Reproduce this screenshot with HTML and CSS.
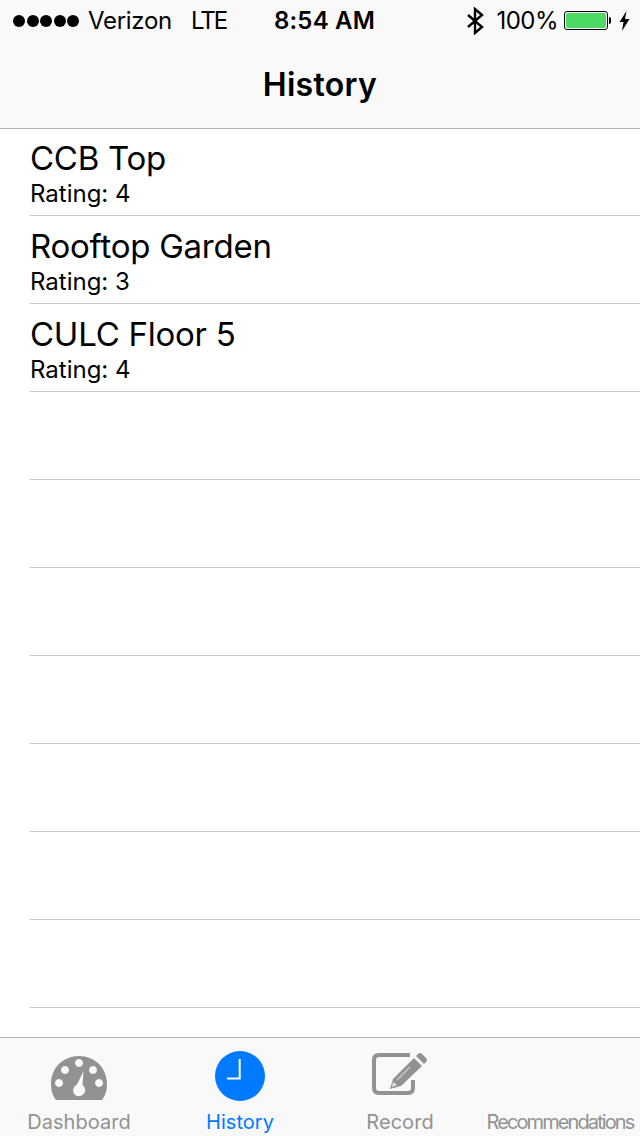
FILE: index.html
```html
<!DOCTYPE html>
<html lang="en">
<head>
    <meta charset="UTF-8">
    <meta name="viewport" content="width=device-width, initial-scale=1.0">
    <title>History</title>
    <link rel="stylesheet" href="styles.css">
</head>
<body>
    <div class="app">
        <header class="top">
            <div class="status">
                <div class="status-left">
                    <div class="dots"><i></i><i></i><i></i><i></i><i></i></div>
                    <span class="carrier">Verizon</span>
                    <span class="net">LTE</span>
                </div>
                <div class="clock">8:54 AM</div>
                <div class="status-right">
                    <svg class="bt" width="18" height="28" viewBox="0 0 18 28">
                        <path d="M2 8 L16 20 L9 26 V2 L16 8 L2 20" fill="none" stroke="#000" stroke-width="2.4"/>
                    </svg>
                    <span class="pct">100%</span>
                    <div class="battery"><div class="battery-fill"></div></div>
                    <div class="battery-tip"></div>
                    <svg class="bolt" width="11" height="20" viewBox="0 0 11 20">
                        <path d="M7.5 0 L0.5 11 H4.5 L3 20 L10.5 8 H6 Z" fill="#000"/>
                    </svg>
                </div>
            </div>
            <div class="title">History</div>
        </header>

        <main class="list">
            <div class="row"><div class="row-name">CCB Top</div><div class="row-sub">Rating: 4</div></div>
            <div class="row"><div class="row-name">Rooftop Garden</div><div class="row-sub">Rating: 3</div></div>
            <div class="row"><div class="row-name">CULC Floor 5</div><div class="row-sub">Rating: 4</div></div>
            <div class="row"></div>
            <div class="row"></div>
            <div class="row"></div>
            <div class="row"></div>
            <div class="row"></div>
            <div class="row"></div>
            <div class="row"></div>
        </main>

        <nav class="tabs">
            <div class="tab">
                <svg class="gauge" width="58" height="50" viewBox="0 0 58 50">
                    <path fill-rule="evenodd" fill="#929292" d="M6 49 C2 44 1 38 1 33 C1 17 13 5 29 5 C45 5 57 17 57 33 C57 38 56 44 52 49 Z
                        M29 8 a4 4 0 1 0 .01 0 Z
                        M15 15 a4 4 0 1 0 .01 0 Z
                        M43 15 a4 4 0 1 0 .01 0 Z
                        M9 28 a4 4 0 1 0 .01 0 Z
                        M49 28 a4 4 0 1 0 .01 0 Z
                        M33.500 20 L32.500 34 C35.500 36 36 40 34 42.500 C31 46 26 46 24 42.500 C22 39 24 35 27 33.500 Z"/>
                </svg>
                <span class="tab-label tab-label-dash">Dashboard</span>
            </div>
            <div class="tab tab-active">
                <svg width="58" height="50" viewBox="0 0 58 50">
                    <circle cx="29" cy="25" r="25" fill="#007aff"/>
                    <path d="M28.700 8 V27.500 H16" fill="none" stroke="#fff" stroke-width="2"/>
                </svg>
                <span class="tab-label">History</span>
            </div>
            <div class="tab">
                <svg width="58" height="50" viewBox="0 0 58 50">
                    <path d="M39 4 H8 Q3 4 3 9 V37 Q3 42 8 42 H37 Q42 42 42 37 V29" fill="none" stroke="#929292" stroke-width="4"/>
                    <path fill="#929292" d="M47 3 Q49 1 51 3 L55 7 Q57 9 55 11 L53 13 L45 5 Z M43 7 L51 15 L30 35 L19 38 L22 28 Z"/>
                    <path d="M39 16 L26 29" fill="none" stroke="#c8c8c8" stroke-width="1.500"/>
                    <path fill="#e8e8e8" d="M22 31 L26 34 L21 36 Z"/>
                </svg>
                <span class="tab-label">Record</span>
            </div>
            <div class="tab">
                <span class="tab-label tab-label-tight">Recommendations</span>
            </div>
        </nav>
    </div>
</body>
</html>
```

FILE: styles.css
```css
* {
    box-sizing: border-box;
}
html, body {
    margin: 0;
    padding: 0;
}
body {
    font-family: 'Inter', 'Liberation Sans', sans-serif;
    background-color: #fff;
    color: #000;
}
.app {
    width: 640px;
    height: 1136px;
    display: flex;
    flex-direction: column;
    overflow: hidden;
}
.top {
    height: 129px;
    flex: none;
    background-color: #f9f9f9;
    border-bottom: 1px solid #b2b2b2;
}
.status {
    height: 40px;
    padding: 1px 10px 0 13px;
    display: grid;
    grid-template-columns: 1fr auto 1fr;
    align-items: center;
    font-size: 24px;
}
.status-left {
    display: flex;
    align-items: center;
}
.dots {
    display: flex;
    gap: 1.5px;
    margin-right: 9px;
}
.dots i {
    width: 12px;
    height: 12px;
    border-radius: 50%;
    background-color: #000;
}
.carrier {
    letter-spacing: -0.3px;
}
.net {
    margin-left: 19px;
    letter-spacing: -2px;
}
.clock {
    padding-left: 6px;
    font-weight: 600;
    letter-spacing: 0.2px;
}
.status-right {
    display: flex;
    align-items: center;
    justify-content: flex-end;
}
.bt {
    margin-right: 12px;
}
.pct {
    margin-right: 6px;
    letter-spacing: -0.5px;
}
.battery {
    width: 44px;
    height: 19px;
    padding: 1px;
    border: 1px solid #000;
    border-radius: 3px;
}
.battery-fill {
    height: 100%;
    background-color: #4cd964;
    border-radius: 2px;
}
.battery-tip {
    width: 2px;
    height: 7px;
    margin-left: 1px;
    margin-right: 8px;
    background-color: #000;
    border-radius: 0 2px 2px 0;
}
.title {
    height: 88px;
    display: flex;
    align-items: center;
    justify-content: center;
    font-size: 32px;
    font-weight: 600;
    letter-spacing: 0.3px;
}
.list {
    flex: 1;
    min-height: 0;
    overflow: hidden;
    padding-left: 30px;
}
.row {
    height: 88px;
    border-bottom: 1px solid #c8c7cc;
}
.row:first-child {
    height: 87px;
}
.row-name {
    height: 52px;
    padding-top: 9px;
    font-size: 33px;
    line-height: 42px;
    letter-spacing: -0.25px;
}
.row:first-child .row-name {
    height: 51px;
    padding-top: 8px;
}
.row-sub {
    font-size: 24px;
    line-height: 28px;
}
.tabs {
    height: 99px;
    flex: none;
    display: grid;
    grid-template-columns: repeat(4, 1fr);
    background-color: #f9f9f9;
    border-top: 1px solid #b2b2b2;
}
.tab {
    display: flex;
    flex-direction: column;
    align-items: center;
    justify-content: flex-end;
    padding-bottom: 1px;
    color: #929292;
}
.tab svg {
    margin-bottom: 8px;
}
.tab .gauge {
    margin-right: 2px;
}
.tab-active {
    color: #007aff;
}
.tab-label {
    font-size: 20px;
    line-height: 26px;
    letter-spacing: 0.05px;
}
.tab-label-dash {
    margin-right: 2px;
}
.tab-label-tight {
    letter-spacing: -1.9px;
    white-space: nowrap;
}
```
